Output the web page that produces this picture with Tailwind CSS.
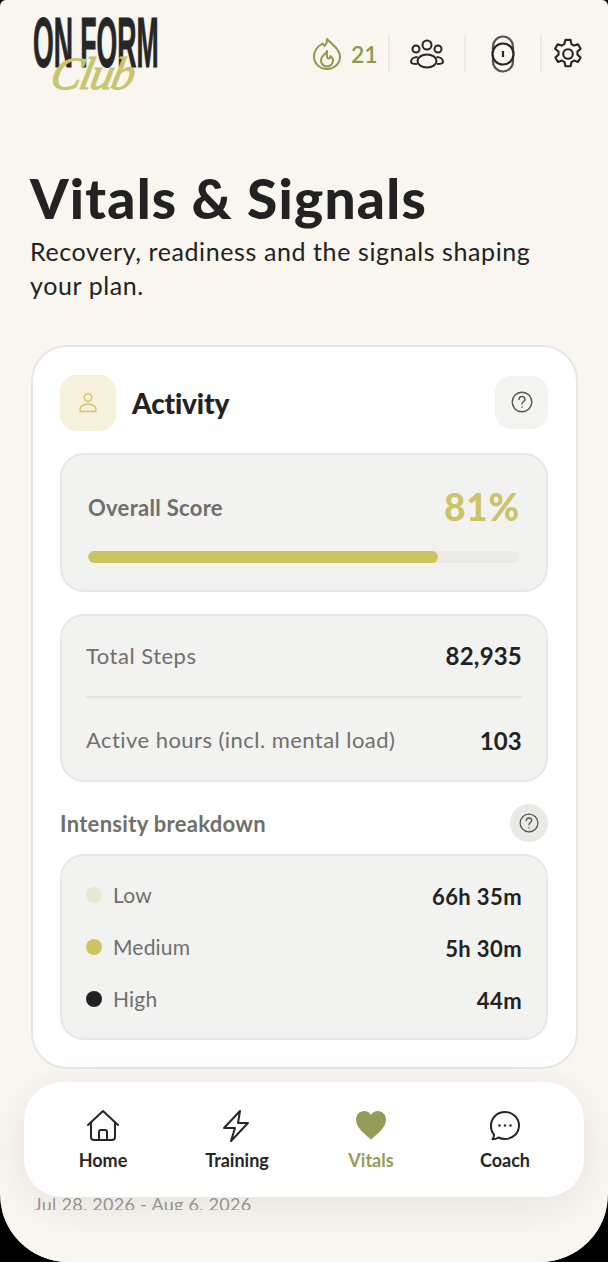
<!doctype html>
<html><head><meta charset="utf-8"><script src="https://cdn.jsdelivr.net/npm/@tailwindcss/browser@4"></script></head>
<body class="bg-black">
<div class="relative w-[608px] h-[1262px] overflow-hidden bg-[#f9f6f0] rounded-b-[68px] rounded-t-[6px] font-['Lato',sans-serif] text-[#222222]">
  <header class="h-[110px] pl-[33px] pr-[24px] pt-[17px] flex items-start justify-between">
    <div class="relative w-[126px] h-[78px]">
      <span class="absolute left-0 top-0 origin-top-left scale-x-[0.375] whitespace-nowrap font-['Liberation_Sans',sans-serif] font-bold text-[#262626] text-[71px] leading-[51px] [-webkit-text-stroke:1px_#262626]">ON FORM</span>
      <span class="absolute left-[19px] top-[37px] -skew-x-12 whitespace-nowrap font-['Liberation_Serif',serif] italic text-[#c8c56f] text-[46px] leading-[40px] tracking-[-2px] [-webkit-text-stroke:1px_#c8c56f]">Club</span>
    </div>
    <div class="flex items-center h-[38px] mt-[18px]">
      <div class="flex items-center w-[78px] h-[38px] border-r-2 border-[#ebe9e5]">
        <svg class="w-[32px] h-[34px] -ml-[1px]" viewBox="0 0 32 34" fill="none" stroke="#8f994d" stroke-width="2" stroke-linejoin="round" stroke-linecap="round"><path d="M16 2c.6 4-1.300 5.500-2.500 7-.8-1-1.200-1.500-2-2.500C6.500 9.500 3 14 3 19.500 3 27 9 32 16 32s13-5 13-12.500C29 12 21 7.500 16 2Z"/><path d="M16 14c-1 3-6 4.500-6 9.500 0 3.500 2.700 6 6 6s6-2.500 6-6c0-2-1-3.500-2.500-4.500 0 1.500-1 2.500-2 2.500-1.500 0-2-2-1.500-7.500Z"/></svg>
        <span class="ml-[8px] leading-none font-semibold text-[#8f994d] font-['Lato',sans-serif] text-[23px]">21</span>
      </div>
      <div class="flex justify-center items-center w-[76px] h-[38px] border-r-2 border-[#ebe9e5]">
        <svg class="w-[34px] h-[30px]" viewBox="0 0 34 30" fill="none" stroke="#262626" stroke-width="2"><circle cx="17" cy="6" r="4.500"/><circle cx="6" cy="10" r="3.500"/><circle cx="28" cy="10" r="3.500"/><ellipse cx="17" cy="22" rx="9.500" ry="6.500"/><path d="M7.500 18C4 18 1 20 1 23c0 1.500 2 2 6 2M26.500 18c3.500 0 6.500 2 6.500 5 0 1.500-2 2-6 2"/></svg>
      </div>
      <div class="flex justify-center items-center w-[76px] h-[38px] border-r-2 border-[#ebe9e5]">
        <svg class="w-[26px] h-[38px]" viewBox="0 0 26 38" fill="none" stroke="#262626" stroke-width="2.200"><rect x="3" y="1.500" width="20" height="35" rx="10" stroke="#555555"/><circle cx="13" cy="19" r="10.500" fill="#f9f6f0"/><path d="M13 16v6"/></svg>
      </div>
      <div class="flex justify-end items-center w-[42px]">
        <svg class="w-[36px] h-[36px] -mr-[2px]" viewBox="0 0 24 24" fill="none" stroke="#262626" stroke-width="1.400" stroke-linejoin="round"><path d="M10.300 2.600h3.400l.6 2.800 1.700 1 2.700-.9 1.700 3-2.100 1.900v2l2.100 1.900-1.700 3-2.700-.9-1.700 1-.6 2.800h-3.400l-.6-2.800-1.700-1-2.700.9-1.700-3 2.100-1.900v-2L3.400 8.500l1.700-3 2.700.9 1.700-1Z"/><circle cx="12" cy="12" r="3.200"/></svg>
      </div>
    </div>
  </header>

  <main class="px-[31px] pt-[59px]">
    <h1 class="text-[55px] leading-[58px] font-black text-[#222222] -ml-px tracking-[1.200px] whitespace-nowrap">Vitals &amp; Signals</h1>
    <p class="mt-[7px] text-[25px] leading-[34px] text-[#222222] tracking-[0.6px] w-[530px] -ml-px">Recovery, readiness and the signals shaping your plan.</p>

    <section class="mt-[43px] w-[547px] h-[724px] bg-white border-2 border-[#e7e5e8] rounded-[36px] pl-[27px] pr-[28px] pt-[28px]">
      <div class="flex items-center justify-between h-[56px]">
        <div class="flex items-center gap-[16px]">
          <div class="w-[56px] h-[56px] rounded-[16px] bg-[#f5f1da] flex items-center justify-center">
            <svg class="w-[24px] h-[24px]" viewBox="0 0 24 24" fill="none" stroke="#cfc66e" stroke-width="1.400"><circle cx="12" cy="6.500" r="3.800"/><path d="M12 13c-4.500 0-8 2.500-8 5.500 0 1.500 1 2 2 2h12c1 0 2-.5 2-2 0-3-3.500-5.500-8-5.500Z"/></svg>
          </div>
          <h2 class="text-[28px] leading-none font-black text-[#222222] tracking-[-0.15px]">Activity</h2>
        </div>
        <div class="w-[53px] h-[53px] rounded-[16px] bg-[#f3f3f2] flex items-center justify-center -mt-[2px]">
          <svg class="w-[22px] h-[22px]" viewBox="0 0 22 22" fill="none" stroke="#555555" stroke-width="1.400" stroke-linecap="round"><circle cx="11" cy="11" r="9.800"/><path d="M8 8.500c0-1.800 1.300-3 3-3s3 1.200 3 2.800c0 2.200-3 2.200-3 4.700"/><path d="M11 16v.3"/></svg>
        </div>
      </div>

      <div class="mt-[22px] h-[139px] bg-[#f2f2f1] border-2 border-[#e7e7e9] rounded-[24px] px-[26px]">
        <div class="flex items-center justify-between pt-[20px] h-[84px]">
          <span class="text-[22px] font-bold text-[#6f6f6c] tracking-[0.3px]">Overall Score</span>
          <span class="text-[37px] font-black text-[#cbc369] tracking-[0.8px]">81%</span>
        </div>
        <div class="mt-[12px] h-[12px] rounded-full bg-[#eaeae7] overflow-hidden">
          <div class="h-full rounded-full bg-[#cdc361]" style="width:81%"></div>
        </div>
      </div>

      <div class="mt-[22px] h-[168px] bg-[#f2f2f1] border-2 border-[#e7e7e9] rounded-[24px] px-[24px]">
        <div class="h-[82px] flex items-center justify-between border-b-2 border-[#e4e4e6]">
          <span class="text-[22px] text-[#6f6f6c] tracking-[0.5px] pb-[2px]">Total Steps</span>
          <span class="text-[24px] font-bold text-[#222222] tracking-[0.2px]">82,935</span>
        </div>
        <div class="h-[84px] flex items-center justify-between">
          <span class="text-[22px] text-[#6f6f6c] tracking-[0.45px] pb-[2px]">Active hours (incl. mental load)</span>
          <span class="text-[24px] font-bold text-[#222222] tracking-[0.2px] pt-[2px]">103</span>
        </div>
      </div>

      <div class="mt-[22px] h-[38px] flex items-center justify-between">
        <span class="text-[22px] font-bold text-[#6f6f6c] tracking-[0.3px]">Intensity breakdown</span>
        <div class="w-[38px] h-[38px] rounded-full bg-[#e9e9e6] flex items-center justify-center">
          <svg class="w-[20px] h-[20px]" viewBox="0 0 22 22" fill="none" stroke="#555555" stroke-width="1.400" stroke-linecap="round"><circle cx="11" cy="11" r="9.800"/><path d="M8 8.500c0-1.800 1.300-3 3-3s3 1.200 3 2.800c0 2.200-3 2.200-3 4.700"/><path d="M11 16v.3"/></svg>
        </div>
      </div>

      <div class="mt-[12px] h-[186px] bg-[#f2f2f1] border-2 border-[#e7e7e9] rounded-[24px] px-[24px] pt-[14px]">
        <div class="h-[52px] flex items-center justify-between">
          <span class="flex items-center gap-[11px] text-[21px] text-[#6f6f6c] tracking-[0.2px] pb-[2px]"><i class="w-[16px] h-[16px] rounded-full bg-[#e9e7cf]"></i>Low</span>
          <span class="text-[22px] font-bold text-[#222222] tracking-[0.4px]">66h 35m</span>
        </div>
        <div class="h-[52px] flex items-center justify-between">
          <span class="flex items-center gap-[11px] text-[21px] text-[#6f6f6c] tracking-[0.2px] pb-[2px]"><i class="w-[16px] h-[16px] rounded-full bg-[#cdc361]"></i>Medium</span>
          <span class="text-[22px] font-bold text-[#222222] tracking-[0.4px]">5h 30m</span>
        </div>
        <div class="h-[52px] flex items-center justify-between">
          <span class="flex items-center gap-[11px] text-[21px] text-[#6f6f6c] tracking-[0.2px] pb-[2px]"><i class="w-[16px] h-[16px] rounded-full bg-[#222222]"></i>High</span>
          <span class="text-[22px] font-bold text-[#222222] tracking-[0.4px]">44m</span>
        </div>
      </div>
    </section>

    <p class="mt-[122px] pl-[3px] text-[18px] leading-[26px] text-[#9a9a98] tracking-[0.3px] whitespace-nowrap">Jul 28, 2026 - Aug 6, 2026</p>
  </main>

  <div class="absolute left-0 right-0 top-[1210px] bottom-0 bg-[#f9f6f0]"></div>

  <nav class="absolute left-[24px] top-[1082px] w-[560px] h-[115px] rounded-[38px] bg-white shadow-[0_10px_50px_rgba(0,0,0,0.08)] grid grid-cols-4 px-[12px] text-[18px] font-bold">
    <a class="flex flex-col items-center pt-[27px]">
      <svg class="w-[34px] h-[34px]" viewBox="0 0 34 34" fill="none" stroke="#262626" stroke-width="2" stroke-linecap="round" stroke-linejoin="round"><path d="M2 16 17 2l15 14"/><path d="M5 13.500V28a3 3 0 0 0 3 3h18a3 3 0 0 0 3-3V13.500"/><path d="M13 31v-8a2 2 0 0 1 2-2h4a2 2 0 0 1 2 2v8"/></svg>
      <span class="mt-[6px] leading-[22px] text-[#262626]">Home</span>
    </a>
    <a class="flex flex-col items-center pt-[27px]">
      <svg class="w-[34px] h-[34px]" viewBox="0 0 34 34" fill="none" stroke="#262626" stroke-width="2" stroke-linejoin="round"><path d="M20 2 4 19h11l-4 13 17-18H18Z"/></svg>
      <span class="mt-[6px] leading-[22px] text-[#262626]">Training</span>
    </a>
    <a class="flex flex-col items-center pt-[27px] text-[#949c57]">
      <svg class="w-[34px] h-[34px]" viewBox="0 0 34 34" fill="#949c57"><path d="M17 30.500C11 25 2 19 2 10.500 2 5.500 6 2 10 2c3 0 5.500 1.500 7 4 1.500-2.500 4-4 7-4 4 0 8 3.500 8 8.500C32 19 23 25 17 30.500Z"/></svg>
      <span class="mt-[6px] leading-[22px]">Vitals</span>
    </a>
    <a class="flex flex-col items-center pt-[27px]">
      <svg class="w-[34px] h-[34px]" viewBox="0 0 34 34" fill="none" stroke="#262626" stroke-width="2" stroke-linejoin="round"><path d="M17 3c8 0 14 6 14 13.500S25 30 17 30c-2.500 0-4.500-.5-6.500-1.500-1.500 1-3.500 1.800-6 1.800 1-1.300 1.500-3 1.500-4.800-2.500-2.500-3-5.500-3-9C3 9 9 3 17 3Z"/><circle cx="11.500" cy="16.500" r="1.200" fill="#262626" stroke="none"/><circle cx="17" cy="16.500" r="1.200" fill="#262626" stroke="none"/><circle cx="22.500" cy="16.500" r="1.200" fill="#262626" stroke="none"/></svg>
      <span class="mt-[6px] leading-[22px] text-[#262626]">Coach</span>
    </a>
  </nav>
</div>
</body></html>
